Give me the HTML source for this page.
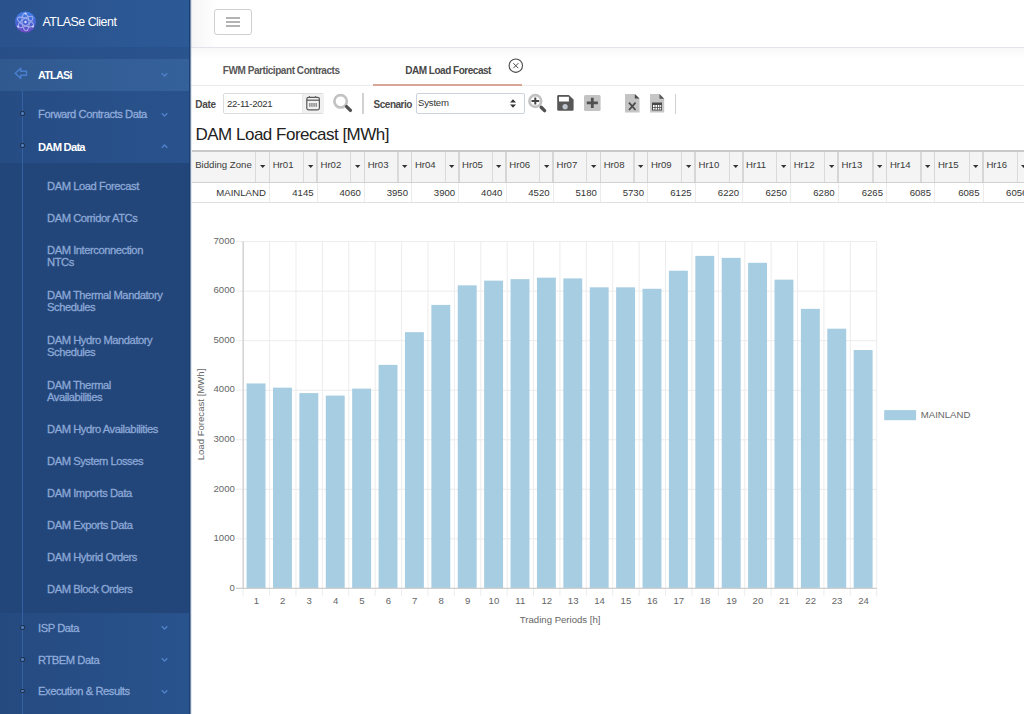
<!DOCTYPE html><html><head><meta charset="utf-8"><style>
*{box-sizing:border-box;margin:0;padding:0}
html,body{width:1024px;height:714px;overflow:hidden;background:#fff;font-family:"Liberation Sans",sans-serif}
.a{position:absolute;white-space:nowrap}
#sb{position:absolute;left:0;top:0;width:191px;height:714px;background:#28508a;overflow:hidden}
.sbt{position:absolute;white-space:nowrap;font-size:11.2px;letter-spacing:-0.45px;line-height:12px}
.sub{color:#8ca8d6;left:47px;-webkit-text-stroke:0.3px #8ca8d6}
.par{color:#b0c2dd;left:38px}
.chev{position:absolute;left:160.5px;width:7px;height:7px}
.dot{position:absolute;left:20px;width:5px;height:4.6px;border-radius:50%;border:1.2px solid #1e2c40;background:#4f80c4}
.tbl{position:absolute;top:150px;left:192px;height:53px;border-top:2px solid #cfcfcf}
.th{position:absolute;top:152px;height:30px;background:#f3f3f3;border-right:1px solid #d8d8d8;border-bottom:1px solid #d0d0d0}
.thl{position:absolute;font-size:9.6px;color:#333;top:8px;letter-spacing:0}
.dd{position:absolute;top:0;height:30px;border-left:1px solid #d8d8d8}
.td{position:absolute;top:182px;height:21px;border-right:1px solid #e8e8e8;border-bottom:1px solid #dcdcdc;font-size:9.6px;color:#333;text-align:right;padding-right:3px;line-height:21px}
.lab{position:absolute;font-size:9.6px;color:#666;white-space:nowrap}
</style></head><body>
<div id="sb">
<div class="a" style="left:0;top:0;width:191px;height:47px;background:linear-gradient(90deg,#2a528d,#2c5a97)"></div>
<div class="a" style="left:0;top:47px;width:191px;height:12px;background:linear-gradient(90deg,#284e87,#2a548e)"></div>
<div class="a" style="left:0;top:59px;width:191px;height:32px;background:linear-gradient(90deg,#30598f,#35619b)"></div>
<div class="a" style="left:0;top:91px;width:191px;height:72px;background:linear-gradient(90deg,#264c84,#29528c)"></div>
<div class="a" style="left:0;top:163px;width:191px;height:450px;background:#23467a"></div>
<div class="a" style="left:0;top:613px;width:191px;height:101px;background:linear-gradient(90deg,#254a80,#29538d)"></div>
<div class="a" style="left:189px;top:0;width:1px;height:714px;background:#1e4070"></div>
<div class="a" style="left:190px;top:0;width:1px;height:714px;background:#728cae"></div>
<svg class="a" style="left:15px;top:11px" width="21" height="22" viewBox="0 0 21 22">
<defs><linearGradient id="lg" x1="0" y1="0" x2="0" y2="1"><stop offset="0" stop-color="#3f80e6"/><stop offset="0.6" stop-color="#4a62d2"/><stop offset="1" stop-color="#7048c0"/></linearGradient></defs>
<circle cx="10.5" cy="11" r="10.5" fill="url(#lg)"/>
<g fill="none" stroke="#b4bdf0" stroke-width="1.05" opacity="0.8">
<ellipse cx="10.5" cy="11" rx="8.8" ry="3.5" transform="rotate(25 10.5 11)"/>
<ellipse cx="10.5" cy="11" rx="8.8" ry="3.5" transform="rotate(-35 10.5 11)"/>
<ellipse cx="10.5" cy="11" rx="8.8" ry="3.5" transform="rotate(85 10.5 11)"/>
</g><circle cx="10.5" cy="11" r="1.2" fill="#dcd8ff"/><circle cx="10.5" cy="2.6" r="1.1" fill="#cfd4ff"/><circle cx="3.2" cy="15.5" r="1.1" fill="#cfd4ff"/><circle cx="17.8" cy="15.5" r="1.1" fill="#cfd4ff"/></svg>
<div class="a" style="left:42.5px;top:15px;font-size:12.4px;letter-spacing:-0.5px;color:#fff;line-height:14px">ATLASe Client</div>
<svg class="a" style="left:0;top:0" width="40" height="90"><path d="M15.2,73.2 L20.7,68.3 L20.7,71.2 L26.5,71.2 L26.5,75.3 L20.7,75.3 L20.7,78.4 Z" fill="none" stroke="#4a7fcf" stroke-width="1.5" stroke-linejoin="round"/></svg>
<div class="sbt" style="left:38px;top:69px;color:#fff;font-weight:bold;font-size:10.8px;letter-spacing:-0.75px">ATLASi</div>
<svg class="chev" style="top:70.5px" width="7" height="7" viewBox="0 0 7 7"><path d="M0.7,2.2 L3.5,5 L6.3,2.2" fill="none" stroke="#4f80c8" stroke-width="1.4"/></svg>
<div class="a" style="left:22px;top:91px;width:1px;height:623px;background:#3363a3"></div>
<div class="dot" style="top:111.4px"></div><div class="sbt" style="left:38px;top:108.1px;color:#8fabda;font-weight:normal;letter-spacing:-0.45px;-webkit-text-stroke:0.3px #8fabda">Forward Contracts Data</div><svg class="chev" style="top:110.5px" width="7" height="7" viewBox="0 0 7 7"><path d="M0.7,2.2 L3.5,5 L6.3,2.2" fill="none" stroke="#4f80c8" stroke-width="1.4"/></svg>
<div class="dot" style="top:143.4px"></div><div class="sbt" style="left:38px;top:140.5px;color:#fff;font-weight:bold;letter-spacing:-0.75px;-webkit-text-stroke:0px #fff">DAM Data</div><svg class="chev" style="top:142.5px" width="7" height="7" viewBox="0 0 7 7"><path d="M0.7,4.8 L3.5,2 L6.3,4.8" fill="none" stroke="#4f80c8" stroke-width="1.4"/></svg>
<div class="sbt sub" style="top:179.5px;line-height:12.6px">DAM Load Forecast</div>
<div class="sbt sub" style="top:211.5px;line-height:12.6px">DAM Corridor ATCs</div>
<div class="sbt sub" style="top:243.5px;line-height:12.6px">DAM Interconnection<br>NTCs</div>
<div class="sbt sub" style="top:288.5px;line-height:12.6px">DAM Thermal Mandatory<br>Schedules</div>
<div class="sbt sub" style="top:333.5px;line-height:12.6px">DAM Hydro Mandatory<br>Schedules</div>
<div class="sbt sub" style="top:378.5px;line-height:12.6px">DAM Thermal<br>Availabilities</div>
<div class="sbt sub" style="top:422.5px;line-height:12.6px">DAM Hydro Availabilities</div>
<div class="sbt sub" style="top:454.5px;line-height:12.6px">DAM System Losses</div>
<div class="sbt sub" style="top:486.5px;line-height:12.6px">DAM Imports Data</div>
<div class="sbt sub" style="top:518.5px;line-height:12.6px">DAM Exports Data</div>
<div class="sbt sub" style="top:550.5px;line-height:12.6px">DAM Hybrid Orders</div>
<div class="sbt sub" style="top:582.5px;line-height:12.6px">DAM Block Orders</div>
<div class="dot" style="top:625.0px"></div><div class="sbt" style="left:38px;top:621.7px;color:#8fabda;font-weight:normal;letter-spacing:-0.45px;-webkit-text-stroke:0.3px #8fabda">ISP Data</div><svg class="chev" style="top:624.1px" width="7" height="7" viewBox="0 0 7 7"><path d="M0.7,2.2 L3.5,5 L6.3,2.2" fill="none" stroke="#4f80c8" stroke-width="1.4"/></svg>
<div class="dot" style="top:657.1999999999999px"></div><div class="sbt" style="left:38px;top:653.9px;color:#8fabda;font-weight:normal;letter-spacing:-0.45px;-webkit-text-stroke:0.3px #8fabda">RTBEM Data</div><svg class="chev" style="top:656.3px" width="7" height="7" viewBox="0 0 7 7"><path d="M0.7,2.2 L3.5,5 L6.3,2.2" fill="none" stroke="#4f80c8" stroke-width="1.4"/></svg>
<div class="dot" style="top:688.6999999999999px"></div><div class="sbt" style="left:38px;top:685.4px;color:#8fabda;font-weight:normal;letter-spacing:-0.45px;-webkit-text-stroke:0.3px #8fabda">Execution &amp; Results</div><svg class="chev" style="top:687.8px" width="7" height="7" viewBox="0 0 7 7"><path d="M0.7,2.2 L3.5,5 L6.3,2.2" fill="none" stroke="#4f80c8" stroke-width="1.4"/></svg>
</div>
<div class="a" style="left:191px;top:0;width:833px;height:48px;background:#fff;border-bottom:1px solid #e3e2ee"></div>
<div class="a" style="left:191px;top:0;width:26px;height:47px;background:linear-gradient(90deg,rgba(0,0,0,0.04),rgba(0,0,0,0))"></div>
<div class="a" style="left:214px;top:9px;width:38px;height:26px;border:1px solid #cfcfcf;border-radius:3px;background:#fff"></div>
<div class="a" style="left:225.5px;top:16.5px;width:14.5px;height:2px;background:#b3b3b3"></div>
<div class="a" style="left:225.5px;top:20.5px;width:14.5px;height:2px;background:#b3b3b3"></div>
<div class="a" style="left:225.5px;top:24.5px;width:14.5px;height:2px;background:#b3b3b3"></div>
<div class="a" style="left:191px;top:48px;width:833px;height:37px;background:linear-gradient(#f8f8f8,#fff 30%)"></div>
<div class="a" style="left:191px;top:85px;width:833px;height:1px;background:#ececec"></div>
<div class="a" style="left:222.8px;top:64.5px;font-size:10px;font-weight:bold;color:#585858;letter-spacing:-0.44px">FWM Participant Contracts</div>
<div class="a" style="left:405.2px;top:64.5px;font-size:10px;font-weight:bold;color:#484848;letter-spacing:-0.48px">DAM Load Forecast</div>
<div class="a" style="left:372.7px;top:84px;width:149.3px;height:1.5px;background:#d9a797"></div>
<svg class="a" style="left:507px;top:57px" width="18" height="18"><circle cx="8.8" cy="8.7" r="6.7" fill="none" stroke="#4a4a4a" stroke-width="1.1"/><path d="M6.3,6.2 L11.3,11.2 M11.3,6.2 L6.3,11.2" stroke="#4a4a4a" stroke-width="1"/></svg>
<div class="a" style="left:195.3px;top:99.4px;font-size:10px;font-weight:bold;color:#4a4a4a;letter-spacing:-0.3px">Date</div>
<div class="a" style="left:223.4px;top:93.1px;width:101px;height:20.5px;border:1px solid #dcdcdc;border-radius:2px;background:#fff"></div>
<div class="a" style="left:301.5px;top:94.1px;width:22.8px;height:18.5px;background:#f1f1f1;border-left:1px solid #e8e8e8"></div>
<div class="a" style="left:227px;top:97.5px;font-size:9.6px;color:#333;letter-spacing:-0.3px">22-11-2021</div>
<svg class="a" style="left:305px;top:95px" width="16" height="16" viewBox="0 0 16 16"><rect x="1.8" y="2.3" width="12.6" height="12.6" rx="1.8" fill="none" stroke="#585858" stroke-width="1.2"/><path d="M1.8,5.2 H14.4" stroke="#585858" stroke-width="1.2"/><path d="M4.5,0.9 V2.8 M10.6,0.9 V2.8" stroke="#6a6a6a" stroke-width="1.1"/><g fill="#6a6a6a"><rect x="4.3" y="8" width="1.1" height="3.8"/><rect x="6.4" y="8" width="1.1" height="3.8"/><rect x="8.5" y="8" width="1.1" height="3.8"/><rect x="10.6" y="8" width="1.1" height="3.8"/></g></svg>
<svg class="a" style="left:332px;top:92px" width="22" height="22" viewBox="0 0 22 22"><circle cx="8.6" cy="9.3" r="6.2" fill="none" stroke="#c2c2c2" stroke-width="2.7"/><path d="M14.6,14.6 L18.4,18.4" stroke="#505050" stroke-width="3.3" stroke-linecap="round"/></svg>
<div class="a" style="left:362.3px;top:93.4px;width:1.6px;height:20.2px;background:#d2d2d2"></div>
<div class="a" style="left:373.6px;top:99.4px;font-size:10px;font-weight:bold;color:#4a4a4a;letter-spacing:-0.5px">Scenario</div>
<div class="a" style="left:415.9px;top:93.3px;width:109.6px;height:20.4px;border:1px solid #cdd3dc;border-radius:2px;background:#fff"></div>
<div class="a" style="left:418px;top:97px;font-size:9.6px;color:#333;letter-spacing:-0.2px">System</div>
<svg class="a" style="left:509px;top:98px" width="8" height="11"><path d="M1,4.5 L4,1.3 L7,4.5 Z M1,6.5 L4,9.7 L7,6.5 Z" fill="#333"/></svg>
<svg class="a" style="left:527px;top:93px" width="21" height="21" viewBox="0 0 21 21"><circle cx="8.3" cy="8" r="5.9" fill="none" stroke="#c2c2c2" stroke-width="2.6"/><path d="M8.3,4.6 V11.6 M4.5,8.1 H12.2" stroke="#454545" stroke-width="2"/><path d="M14.2,14.2 L17.6,17.6" stroke="#505050" stroke-width="3.4" stroke-linecap="round"/></svg>
<svg class="a" style="left:557px;top:95px" width="17" height="16" viewBox="0 0 17 16"><path d="M0.2,1.2 Q0.2,0 1.4,0 H11.8 L16.6,4.6 V14.6 Q16.6,15.8 15.4,15.8 H1.4 Q0.2,15.8 0.2,14.6 Z" fill="#575757"/><rect x="2" y="1.8" width="9.9" height="4.7" fill="#fff"/><circle cx="8.1" cy="11.7" r="2.6" fill="#bfc5ce"/></svg>
<svg class="a" style="left:584px;top:95px" width="17" height="16" viewBox="0 0 17 16"><rect x="0" y="0" width="16.6" height="16" rx="1.5" fill="#c3c3c3"/><path d="M8.3,2.8 V12.9 M2.8,7.8 H13.9" stroke="#505050" stroke-width="2.8"/></svg>
<svg class="a" style="left:624.5px;top:93.5px" width="15" height="19" viewBox="0 0 15 19"><path d="M0,0 H9.8 L14.5,4.5 V18.4 H0 Z" fill="#c4c4c4"/><path d="M9.8,0 L14.5,4.5 H9.8 Z" fill="#4a4a4a"/><path d="M4,8.7 L10.5,16 M10.5,8.7 L4,16" stroke="#4a4a4a" stroke-width="1.8"/></svg>
<svg class="a" style="left:649.5px;top:93.5px" width="15" height="19" viewBox="0 0 15 19"><path d="M0,0 H9.5 L14.2,4.7 V18.5 H0 Z" fill="#c6c6c6"/><path d="M9.5,0 L14.2,4.7 H9.5 Z" fill="#555"/><rect x="2" y="8.5" width="10" height="8" fill="#4a4a4a"/><g fill="#fff"><rect x="3" y="11" width="1.6" height="2"/><rect x="5.4" y="11" width="1.6" height="2"/><rect x="7.8" y="11" width="1.6" height="2"/><rect x="10.2" y="11" width="1" height="2"/><rect x="3" y="13.8" width="1.6" height="1.8"/><rect x="5.4" y="13.8" width="1.6" height="1.8"/><rect x="7.8" y="13.8" width="1.6" height="1.8"/><rect x="10.2" y="13.8" width="1" height="1.8"/></g></svg>
<div class="a" style="left:674.9px;top:93.5px;width:1.6px;height:20px;background:#d2d2d2"></div>
<div class="a" style="left:195.5px;top:125px;font-size:17px;color:#222;letter-spacing:-0.5px;line-height:20px">DAM Load Forecast [MWh]</div>
<div class="a" style="left:192px;top:150px;width:832px;height:2px;background:#c9c9c9"></div>
<div class="a" style="left:192px;top:152px;width:832px;height:29.8px;background:#f4f4f4"></div>
<div class="a" style="left:192px;top:181.7px;width:832px;height:1.6px;background:#d0d0d0"></div>
<div class="a" style="left:192px;top:201.8px;width:832px;height:1.2px;background:#e0e0e0"></div>
<div class="a" style="left:268.59999999999997px;top:152px;width:1.6px;height:30px;background:#d6d6d6"></div>
<div class="a" style="left:268.9px;top:183px;width:1px;height:19px;background:#ececec"></div>
<div class="a" style="left:255.1px;top:152px;width:1.4px;height:30px;background:#dadada"></div>
<svg class="a" style="left:259.7px;top:165.1px" width="6" height="4"><path d="M0,0 H5.4 L2.7,2.9 Z" fill="#333"/></svg>
<div class="a" style="left:195.2px;top:159.1px;font-size:9.6px;color:#3a3a3a;line-height:11px">Bidding Zone</div>
<div class="a" style="right:758.2px;top:186.5px;font-size:9.6px;color:#333;line-height:11px">MAINLAND</div>
<div class="a" style="left:316.4px;top:152px;width:1.6px;height:30px;background:#d6d6d6"></div>
<div class="a" style="left:316.7px;top:183px;width:1px;height:19px;background:#ececec"></div>
<div class="a" style="left:302.9px;top:152px;width:1.4px;height:30px;background:#dadada"></div>
<svg class="a" style="left:307.49999999999994px;top:165.1px" width="6" height="4"><path d="M0,0 H5.4 L2.7,2.9 Z" fill="#333"/></svg>
<div class="a" style="left:272.7px;top:159.1px;font-size:9.6px;color:#3a3a3a;line-height:11px">Hr01</div>
<div class="a" style="right:710.4000000000001px;top:186.5px;font-size:9.6px;color:#333;line-height:11px">4145</div>
<div class="a" style="left:363.59999999999997px;top:152px;width:1.6px;height:30px;background:#d6d6d6"></div>
<div class="a" style="left:363.9px;top:183px;width:1px;height:19px;background:#ececec"></div>
<div class="a" style="left:350.09999999999997px;top:152px;width:1.4px;height:30px;background:#dadada"></div>
<svg class="a" style="left:354.69999999999993px;top:165.1px" width="6" height="4"><path d="M0,0 H5.4 L2.7,2.9 Z" fill="#333"/></svg>
<div class="a" style="left:320.5px;top:159.1px;font-size:9.6px;color:#3a3a3a;line-height:11px">Hr02</div>
<div class="a" style="right:663.2px;top:186.5px;font-size:9.6px;color:#333;line-height:11px">4060</div>
<div class="a" style="left:410.8px;top:152px;width:1.6px;height:30px;background:#d6d6d6"></div>
<div class="a" style="left:411.1px;top:183px;width:1px;height:19px;background:#ececec"></div>
<div class="a" style="left:397.3px;top:152px;width:1.4px;height:30px;background:#dadada"></div>
<svg class="a" style="left:401.9px;top:165.1px" width="6" height="4"><path d="M0,0 H5.4 L2.7,2.9 Z" fill="#333"/></svg>
<div class="a" style="left:367.7px;top:159.1px;font-size:9.6px;color:#3a3a3a;line-height:11px">Hr03</div>
<div class="a" style="right:616.0px;top:186.5px;font-size:9.6px;color:#333;line-height:11px">3950</div>
<div class="a" style="left:458.0px;top:152px;width:1.6px;height:30px;background:#d6d6d6"></div>
<div class="a" style="left:458.3px;top:183px;width:1px;height:19px;background:#ececec"></div>
<div class="a" style="left:444.5px;top:152px;width:1.4px;height:30px;background:#dadada"></div>
<svg class="a" style="left:449.09999999999997px;top:165.1px" width="6" height="4"><path d="M0,0 H5.4 L2.7,2.9 Z" fill="#333"/></svg>
<div class="a" style="left:414.90000000000003px;top:159.1px;font-size:9.6px;color:#3a3a3a;line-height:11px">Hr04</div>
<div class="a" style="right:568.8px;top:186.5px;font-size:9.6px;color:#333;line-height:11px">3900</div>
<div class="a" style="left:505.2px;top:152px;width:1.6px;height:30px;background:#d6d6d6"></div>
<div class="a" style="left:505.5px;top:183px;width:1px;height:19px;background:#ececec"></div>
<div class="a" style="left:491.7px;top:152px;width:1.4px;height:30px;background:#dadada"></div>
<svg class="a" style="left:496.29999999999995px;top:165.1px" width="6" height="4"><path d="M0,0 H5.4 L2.7,2.9 Z" fill="#333"/></svg>
<div class="a" style="left:462.1px;top:159.1px;font-size:9.6px;color:#3a3a3a;line-height:11px">Hr05</div>
<div class="a" style="right:521.6px;top:186.5px;font-size:9.6px;color:#333;line-height:11px">4040</div>
<div class="a" style="left:552.4000000000001px;top:152px;width:1.6px;height:30px;background:#d6d6d6"></div>
<div class="a" style="left:552.7px;top:183px;width:1px;height:19px;background:#ececec"></div>
<div class="a" style="left:538.9px;top:152px;width:1.4px;height:30px;background:#dadada"></div>
<svg class="a" style="left:543.5px;top:165.1px" width="6" height="4"><path d="M0,0 H5.4 L2.7,2.9 Z" fill="#333"/></svg>
<div class="a" style="left:509.3px;top:159.1px;font-size:9.6px;color:#3a3a3a;line-height:11px">Hr06</div>
<div class="a" style="right:474.4px;top:186.5px;font-size:9.6px;color:#333;line-height:11px">4520</div>
<div class="a" style="left:599.6px;top:152px;width:1.6px;height:30px;background:#d6d6d6"></div>
<div class="a" style="left:599.9px;top:183px;width:1px;height:19px;background:#ececec"></div>
<div class="a" style="left:586.0999999999999px;top:152px;width:1.4px;height:30px;background:#dadada"></div>
<svg class="a" style="left:590.6999999999999px;top:165.1px" width="6" height="4"><path d="M0,0 H5.4 L2.7,2.9 Z" fill="#333"/></svg>
<div class="a" style="left:556.5px;top:159.1px;font-size:9.6px;color:#3a3a3a;line-height:11px">Hr07</div>
<div class="a" style="right:427.20000000000005px;top:186.5px;font-size:9.6px;color:#333;line-height:11px">5180</div>
<div class="a" style="left:646.8000000000001px;top:152px;width:1.6px;height:30px;background:#d6d6d6"></div>
<div class="a" style="left:647.1px;top:183px;width:1px;height:19px;background:#ececec"></div>
<div class="a" style="left:633.3px;top:152px;width:1.4px;height:30px;background:#dadada"></div>
<svg class="a" style="left:637.9px;top:165.1px" width="6" height="4"><path d="M0,0 H5.4 L2.7,2.9 Z" fill="#333"/></svg>
<div class="a" style="left:603.6999999999999px;top:159.1px;font-size:9.6px;color:#3a3a3a;line-height:11px">Hr08</div>
<div class="a" style="right:380.0px;top:186.5px;font-size:9.6px;color:#333;line-height:11px">5730</div>
<div class="a" style="left:694.4000000000001px;top:152px;width:1.6px;height:30px;background:#d6d6d6"></div>
<div class="a" style="left:694.7px;top:183px;width:1px;height:19px;background:#ececec"></div>
<div class="a" style="left:680.9px;top:152px;width:1.4px;height:30px;background:#dadada"></div>
<svg class="a" style="left:685.5px;top:165.1px" width="6" height="4"><path d="M0,0 H5.4 L2.7,2.9 Z" fill="#333"/></svg>
<div class="a" style="left:650.9px;top:159.1px;font-size:9.6px;color:#3a3a3a;line-height:11px">Hr09</div>
<div class="a" style="right:332.4px;top:186.5px;font-size:9.6px;color:#333;line-height:11px">6125</div>
<div class="a" style="left:742.0px;top:152px;width:1.6px;height:30px;background:#d6d6d6"></div>
<div class="a" style="left:742.3px;top:183px;width:1px;height:19px;background:#ececec"></div>
<div class="a" style="left:728.4999999999999px;top:152px;width:1.4px;height:30px;background:#dadada"></div>
<svg class="a" style="left:733.0999999999999px;top:165.1px" width="6" height="4"><path d="M0,0 H5.4 L2.7,2.9 Z" fill="#333"/></svg>
<div class="a" style="left:698.5px;top:159.1px;font-size:9.6px;color:#3a3a3a;line-height:11px">Hr10</div>
<div class="a" style="right:284.80000000000007px;top:186.5px;font-size:9.6px;color:#333;line-height:11px">6220</div>
<div class="a" style="left:789.6px;top:152px;width:1.6px;height:30px;background:#d6d6d6"></div>
<div class="a" style="left:789.9px;top:183px;width:1px;height:19px;background:#ececec"></div>
<div class="a" style="left:776.0999999999999px;top:152px;width:1.4px;height:30px;background:#dadada"></div>
<svg class="a" style="left:780.6999999999999px;top:165.1px" width="6" height="4"><path d="M0,0 H5.4 L2.7,2.9 Z" fill="#333"/></svg>
<div class="a" style="left:746.0999999999999px;top:159.1px;font-size:9.6px;color:#3a3a3a;line-height:11px">Hr11</div>
<div class="a" style="right:237.20000000000005px;top:186.5px;font-size:9.6px;color:#333;line-height:11px">6250</div>
<div class="a" style="left:837.4000000000001px;top:152px;width:1.6px;height:30px;background:#d6d6d6"></div>
<div class="a" style="left:837.7px;top:183px;width:1px;height:19px;background:#ececec"></div>
<div class="a" style="left:823.9px;top:152px;width:1.4px;height:30px;background:#dadada"></div>
<svg class="a" style="left:828.5px;top:165.1px" width="6" height="4"><path d="M0,0 H5.4 L2.7,2.9 Z" fill="#333"/></svg>
<div class="a" style="left:793.6999999999999px;top:159.1px;font-size:9.6px;color:#3a3a3a;line-height:11px">Hr12</div>
<div class="a" style="right:189.39999999999998px;top:186.5px;font-size:9.6px;color:#333;line-height:11px">6280</div>
<div class="a" style="left:885.8000000000001px;top:152px;width:1.6px;height:30px;background:#d6d6d6"></div>
<div class="a" style="left:886.1px;top:183px;width:1px;height:19px;background:#ececec"></div>
<div class="a" style="left:872.3px;top:152px;width:1.4px;height:30px;background:#dadada"></div>
<svg class="a" style="left:876.9px;top:165.1px" width="6" height="4"><path d="M0,0 H5.4 L2.7,2.9 Z" fill="#333"/></svg>
<div class="a" style="left:841.5px;top:159.1px;font-size:9.6px;color:#3a3a3a;line-height:11px">Hr13</div>
<div class="a" style="right:141.0px;top:186.5px;font-size:9.6px;color:#333;line-height:11px">6265</div>
<div class="a" style="left:933.8000000000001px;top:152px;width:1.6px;height:30px;background:#d6d6d6"></div>
<div class="a" style="left:934.1px;top:183px;width:1px;height:19px;background:#ececec"></div>
<div class="a" style="left:920.3px;top:152px;width:1.4px;height:30px;background:#dadada"></div>
<svg class="a" style="left:924.9px;top:165.1px" width="6" height="4"><path d="M0,0 H5.4 L2.7,2.9 Z" fill="#333"/></svg>
<div class="a" style="left:889.9px;top:159.1px;font-size:9.6px;color:#3a3a3a;line-height:11px">Hr14</div>
<div class="a" style="right:93.0px;top:186.5px;font-size:9.6px;color:#333;line-height:11px">6085</div>
<div class="a" style="left:982.3000000000001px;top:152px;width:1.6px;height:30px;background:#d6d6d6"></div>
<div class="a" style="left:982.6px;top:183px;width:1px;height:19px;background:#ececec"></div>
<div class="a" style="left:968.8px;top:152px;width:1.4px;height:30px;background:#dadada"></div>
<svg class="a" style="left:973.4px;top:165.1px" width="6" height="4"><path d="M0,0 H5.4 L2.7,2.9 Z" fill="#333"/></svg>
<div class="a" style="left:937.9px;top:159.1px;font-size:9.6px;color:#3a3a3a;line-height:11px">Hr15</div>
<div class="a" style="right:44.5px;top:186.5px;font-size:9.6px;color:#333;line-height:11px">6085</div>
<div class="a" style="left:1030.2px;top:152px;width:1.6px;height:30px;background:#d6d6d6"></div>
<div class="a" style="left:1030.5px;top:183px;width:1px;height:19px;background:#ececec"></div>
<div class="a" style="left:1016.6999999999999px;top:152px;width:1.4px;height:30px;background:#dadada"></div>
<svg class="a" style="left:1021.3px;top:165.1px" width="6" height="4"><path d="M0,0 H5.4 L2.7,2.9 Z" fill="#333"/></svg>
<div class="a" style="left:986.4px;top:159.1px;font-size:9.6px;color:#3a3a3a;line-height:11px">Hr16</div>
<div class="a" style="right:-3.400000000000091px;top:186.5px;font-size:9.6px;color:#333;line-height:11px">6056</div>
<div class="a" style="left:1078.2px;top:152px;width:1.6px;height:30px;background:#d6d6d6"></div>
<div class="a" style="left:1078.5px;top:183px;width:1px;height:19px;background:#ececec"></div>
<div class="a" style="left:1064.7px;top:152px;width:1.4px;height:30px;background:#dadada"></div>
<svg class="a" style="left:1069.3000000000002px;top:165.1px" width="6" height="4"><path d="M0,0 H5.4 L2.7,2.9 Z" fill="#333"/></svg>
<div class="a" style="left:1034.3px;top:159.1px;font-size:9.6px;color:#3a3a3a;line-height:11px">Hr17</div>
<div class="a" style="right:-51.40000000000009px;top:186.5px;font-size:9.6px;color:#333;line-height:11px">6420</div>
<svg class="a" style="left:0;top:0" width="1024" height="714"><line x1="236" y1="588.40" x2="876.7" y2="588.40" stroke="#ececec" stroke-width="1"/><line x1="236" y1="538.86" x2="876.7" y2="538.86" stroke="#ececec" stroke-width="1"/><line x1="236" y1="489.31" x2="876.7" y2="489.31" stroke="#ececec" stroke-width="1"/><line x1="236" y1="439.77" x2="876.7" y2="439.77" stroke="#ececec" stroke-width="1"/><line x1="236" y1="390.23" x2="876.7" y2="390.23" stroke="#ececec" stroke-width="1"/><line x1="236" y1="340.69" x2="876.7" y2="340.69" stroke="#ececec" stroke-width="1"/><line x1="236" y1="291.14" x2="876.7" y2="291.14" stroke="#ececec" stroke-width="1"/><line x1="236" y1="241.60" x2="876.7" y2="241.60" stroke="#ececec" stroke-width="1"/><line x1="243.20" y1="241.60" x2="243.20" y2="595.80" stroke="#ececec" stroke-width="1"/><line x1="269.60" y1="241.60" x2="269.60" y2="595.80" stroke="#ececec" stroke-width="1"/><line x1="295.99" y1="241.60" x2="295.99" y2="595.80" stroke="#ececec" stroke-width="1"/><line x1="322.39" y1="241.60" x2="322.39" y2="595.80" stroke="#ececec" stroke-width="1"/><line x1="348.78" y1="241.60" x2="348.78" y2="595.80" stroke="#ececec" stroke-width="1"/><line x1="375.18" y1="241.60" x2="375.18" y2="595.80" stroke="#ececec" stroke-width="1"/><line x1="401.57" y1="241.60" x2="401.57" y2="595.80" stroke="#ececec" stroke-width="1"/><line x1="427.97" y1="241.60" x2="427.97" y2="595.80" stroke="#ececec" stroke-width="1"/><line x1="454.37" y1="241.60" x2="454.37" y2="595.80" stroke="#ececec" stroke-width="1"/><line x1="480.76" y1="241.60" x2="480.76" y2="595.80" stroke="#ececec" stroke-width="1"/><line x1="507.16" y1="241.60" x2="507.16" y2="595.80" stroke="#ececec" stroke-width="1"/><line x1="533.55" y1="241.60" x2="533.55" y2="595.80" stroke="#ececec" stroke-width="1"/><line x1="559.95" y1="241.60" x2="559.95" y2="595.80" stroke="#ececec" stroke-width="1"/><line x1="586.35" y1="241.60" x2="586.35" y2="595.80" stroke="#ececec" stroke-width="1"/><line x1="612.74" y1="241.60" x2="612.74" y2="595.80" stroke="#ececec" stroke-width="1"/><line x1="639.14" y1="241.60" x2="639.14" y2="595.80" stroke="#ececec" stroke-width="1"/><line x1="665.53" y1="241.60" x2="665.53" y2="595.80" stroke="#ececec" stroke-width="1"/><line x1="691.93" y1="241.60" x2="691.93" y2="595.80" stroke="#ececec" stroke-width="1"/><line x1="718.33" y1="241.60" x2="718.33" y2="595.80" stroke="#ececec" stroke-width="1"/><line x1="744.72" y1="241.60" x2="744.72" y2="595.80" stroke="#ececec" stroke-width="1"/><line x1="771.12" y1="241.60" x2="771.12" y2="595.80" stroke="#ececec" stroke-width="1"/><line x1="797.51" y1="241.60" x2="797.51" y2="595.80" stroke="#ececec" stroke-width="1"/><line x1="823.91" y1="241.60" x2="823.91" y2="595.80" stroke="#ececec" stroke-width="1"/><line x1="850.30" y1="241.60" x2="850.30" y2="595.80" stroke="#ececec" stroke-width="1"/><line x1="876.70" y1="241.60" x2="876.70" y2="595.80" stroke="#ececec" stroke-width="1"/><rect x="246.60" y="383.44" width="18.9" height="204.96" fill="#a6cde2"/><rect x="273.00" y="387.66" width="18.9" height="200.74" fill="#a6cde2"/><rect x="299.39" y="393.11" width="18.9" height="195.29" fill="#a6cde2"/><rect x="325.79" y="395.58" width="18.9" height="192.82" fill="#a6cde2"/><rect x="352.18" y="388.65" width="18.9" height="199.75" fill="#a6cde2"/><rect x="378.58" y="364.87" width="18.9" height="223.53" fill="#a6cde2"/><rect x="404.97" y="332.17" width="18.9" height="256.23" fill="#a6cde2"/><rect x="431.37" y="304.92" width="18.9" height="283.48" fill="#a6cde2"/><rect x="457.77" y="285.35" width="18.9" height="303.05" fill="#a6cde2"/><rect x="484.16" y="280.64" width="18.9" height="307.76" fill="#a6cde2"/><rect x="510.56" y="279.16" width="18.9" height="309.24" fill="#a6cde2"/><rect x="536.95" y="277.67" width="18.9" height="310.73" fill="#a6cde2"/><rect x="563.35" y="278.41" width="18.9" height="309.99" fill="#a6cde2"/><rect x="589.75" y="287.33" width="18.9" height="301.07" fill="#a6cde2"/><rect x="616.14" y="287.33" width="18.9" height="301.07" fill="#a6cde2"/><rect x="642.54" y="288.77" width="18.9" height="299.63" fill="#a6cde2"/><rect x="668.93" y="270.73" width="18.9" height="317.67" fill="#a6cde2"/><rect x="695.33" y="255.87" width="18.9" height="332.53" fill="#a6cde2"/><rect x="721.73" y="257.85" width="18.9" height="330.55" fill="#a6cde2"/><rect x="748.12" y="262.81" width="18.9" height="325.59" fill="#a6cde2"/><rect x="774.52" y="279.65" width="18.9" height="308.75" fill="#a6cde2"/><rect x="800.91" y="308.88" width="18.9" height="279.52" fill="#a6cde2"/><rect x="827.31" y="328.70" width="18.9" height="259.70" fill="#a6cde2"/><rect x="853.70" y="350.00" width="18.9" height="238.40" fill="#a6cde2"/><line x1="243.2" y1="241.6" x2="243.2" y2="588.4" stroke="#cfcfcf" stroke-width="1.3"/><line x1="236" y1="588.4" x2="876.7" y2="588.4" stroke="#cfcfcf" stroke-width="1.3"/><rect x="884.2" y="410.1" width="31.9" height="10.1" fill="#a6cde2"/></svg>
<div class="lab" style="right:789.2px;top:581.6px;line-height:11px">0</div>
<div class="lab" style="right:789.2px;top:532.0571428571429px;line-height:11px">1000</div>
<div class="lab" style="right:789.2px;top:482.5142857142857px;line-height:11px">2000</div>
<div class="lab" style="right:789.2px;top:432.9714285714286px;line-height:11px">3000</div>
<div class="lab" style="right:789.2px;top:383.4285714285714px;line-height:11px">4000</div>
<div class="lab" style="right:789.2px;top:333.8857142857143px;line-height:11px">5000</div>
<div class="lab" style="right:789.2px;top:284.34285714285716px;line-height:11px">6000</div>
<div class="lab" style="right:789.2px;top:234.8px;line-height:11px">7000</div>
<div class="lab" style="left:241.39791666666667px;width:30px;text-align:center;top:595px;line-height:11px">1</div>
<div class="lab" style="left:267.79375px;width:30px;text-align:center;top:595px;line-height:11px">2</div>
<div class="lab" style="left:294.1895833333333px;width:30px;text-align:center;top:595px;line-height:11px">3</div>
<div class="lab" style="left:320.5854166666667px;width:30px;text-align:center;top:595px;line-height:11px">4</div>
<div class="lab" style="left:346.98125px;width:30px;text-align:center;top:595px;line-height:11px">5</div>
<div class="lab" style="left:373.3770833333333px;width:30px;text-align:center;top:595px;line-height:11px">6</div>
<div class="lab" style="left:399.7729166666667px;width:30px;text-align:center;top:595px;line-height:11px">7</div>
<div class="lab" style="left:426.16875px;width:30px;text-align:center;top:595px;line-height:11px">8</div>
<div class="lab" style="left:452.5645833333333px;width:30px;text-align:center;top:595px;line-height:11px">9</div>
<div class="lab" style="left:478.9604166666667px;width:30px;text-align:center;top:595px;line-height:11px">10</div>
<div class="lab" style="left:505.35625000000005px;width:30px;text-align:center;top:595px;line-height:11px">11</div>
<div class="lab" style="left:531.7520833333333px;width:30px;text-align:center;top:595px;line-height:11px">12</div>
<div class="lab" style="left:558.1479166666666px;width:30px;text-align:center;top:595px;line-height:11px">13</div>
<div class="lab" style="left:584.54375px;width:30px;text-align:center;top:595px;line-height:11px">14</div>
<div class="lab" style="left:610.9395833333333px;width:30px;text-align:center;top:595px;line-height:11px">15</div>
<div class="lab" style="left:637.3354166666666px;width:30px;text-align:center;top:595px;line-height:11px">16</div>
<div class="lab" style="left:663.73125px;width:30px;text-align:center;top:595px;line-height:11px">17</div>
<div class="lab" style="left:690.1270833333333px;width:30px;text-align:center;top:595px;line-height:11px">18</div>
<div class="lab" style="left:716.5229166666666px;width:30px;text-align:center;top:595px;line-height:11px">19</div>
<div class="lab" style="left:742.91875px;width:30px;text-align:center;top:595px;line-height:11px">20</div>
<div class="lab" style="left:769.3145833333333px;width:30px;text-align:center;top:595px;line-height:11px">21</div>
<div class="lab" style="left:795.7104166666666px;width:30px;text-align:center;top:595px;line-height:11px">22</div>
<div class="lab" style="left:822.10625px;width:30px;text-align:center;top:595px;line-height:11px">23</div>
<div class="lab" style="left:848.5020833333333px;width:30px;text-align:center;top:595px;line-height:11px">24</div>
<div class="lab" style="left:519.8px;top:613.5px;line-height:11px">Trading Periods [h]</div>
<div class="lab" style="left:920.8px;top:408.5px;line-height:11px">MAINLAND</div>
<div class="lab" style="left:149.6px;top:409px;width:100px;text-align:center;line-height:11px;transform:rotate(-90deg);transform-origin:50% 50%">Load Forecast [MWh]</div>
<div class="a" style="left:191px;top:0;width:1px;height:714px;background:rgba(30,64,112,0.12)"></div>
</body></html>
